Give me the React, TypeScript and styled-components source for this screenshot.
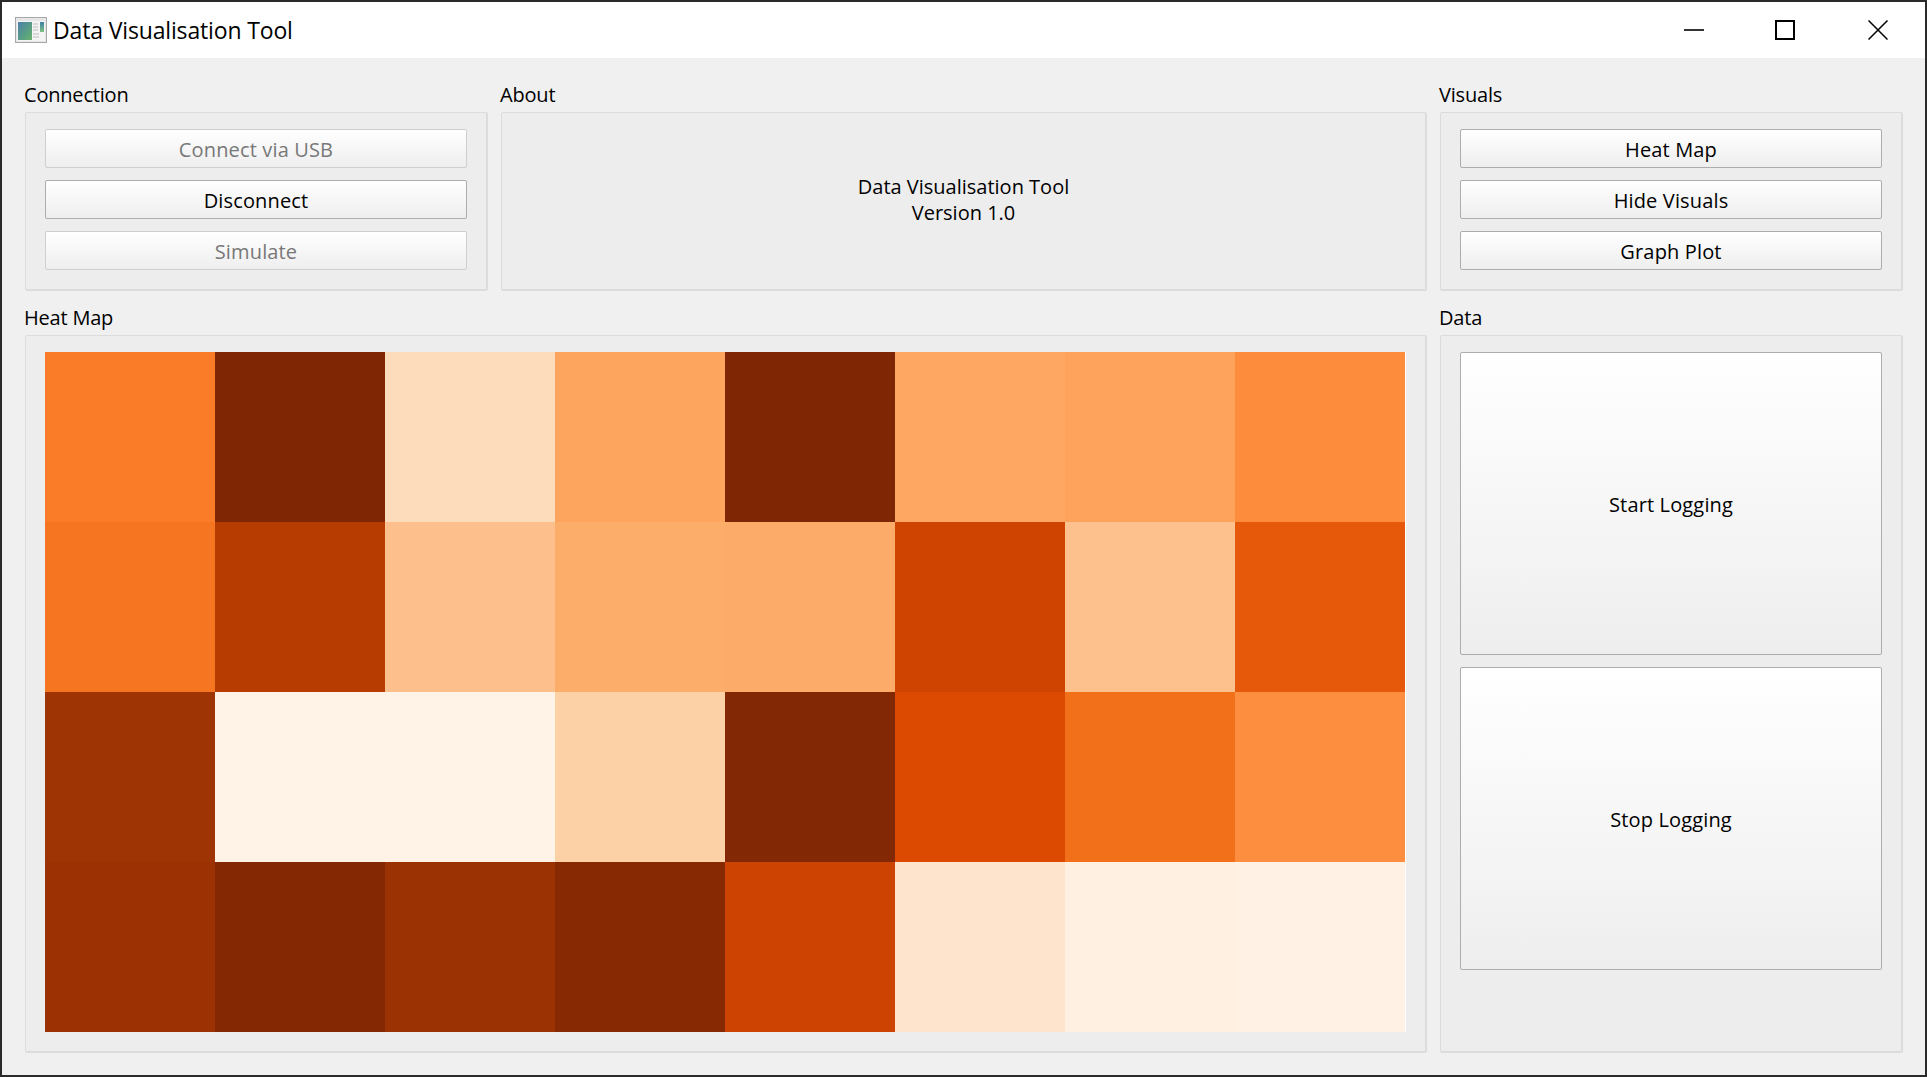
import styled, { createGlobalStyle } from "styled-components"

const GlobalStyle = createGlobalStyle`
  html, body {
    margin: 0;
    padding: 0;
    overflow: hidden;
  }
  * {
    box-sizing: border-box;
  }
`

const heatMap = [
  ["#fa7c28", "#7f2704", "#fddcbc", "#fda55e", "#7f2704", "#fda762", "#fda35c", "#fd8c3c"],
  ["#f67520", "#b63c02", "#fdc08c", "#fdad6a", "#fdab68", "#cf4401", "#fdc18e", "#e6590a"],
  ["#9e3303", "#fff2e6", "#fff3e7", "#fdd1a6", "#832804", "#dc4a02", "#f3701b", "#fd8e40"],
  ["#9c3203", "#842804", "#9b3203", "#872a03", "#cd4301", "#fee4cc", "#fff0e2", "#fff1e4"],
]

const Window = styled.div`
  width: 1927px;
  height: 1077px;
  border: 2px solid #2a2a2a;
  background: #f0f0f0;
  display: flex;
  flex-direction: column;
  font-family: "Open Sans", "Noto Sans", sans-serif;
  color: #000;
`

const TitleBar = styled.div`
  height: 56px;
  flex: none;
  background: #fff;
  display: flex;
  align-items: center;
  padding-left: 13px;
`

const AppTitle = styled.div`
  margin-left: 6px;
  font-size: 23px;
  letter-spacing: -0.15px;
`

const WindowControls = styled.div`
  margin-left: auto;
  display: flex;
  align-items: center;
  gap: 71px;
  padding-right: 37px;
`

const CloseIcon = styled.svg`
  margin-left: 2px;
`

const Content = styled.div`
  flex: 1;
  display: grid;
  grid-template-columns: 463px 926px 463px;
  grid-template-rows: 207px 746px;
  column-gap: 13px;
  row-gap: 16px;
  padding: 26px 22px 22px 23px;
`

const Section = styled.section<{ $span?: number }>`
  display: flex;
  flex-direction: column;
  min-width: 0;
  grid-column: span ${({ $span }) => $span ?? 1};
`

const Label = styled.div`
  height: 24px;
  margin: -1px 0 5px -1px;
  font-size: 20px;
  line-height: 24px;
  letter-spacing: -0.2px;
`

const GroupBox = styled.div`
  flex: 1;
  background: #ededed;
  border: 2px solid #dcdcdc;
  border-width: 1px 2px 2px 1px;
  border-radius: 2px;
  padding: 16px 19px;
  display: flex;
  flex-direction: column;
  gap: 12px;
`

const Button = styled.button<{ $big?: boolean }>`
  height: ${({ $big }) => ($big ? "303px" : "39px")};
  flex: none;
  padding: 1px 0 0;
  font: inherit;
  font-size: 20px;
  letter-spacing: 0.15px;
  color: #000;
  border: 1px solid #adadad;
  border-radius: 2px;
  background: linear-gradient(#fff, #eee);

  &:disabled {
    color: #787878;
    border-color: #cfcfcf;
  }
`

const AboutBox = styled(GroupBox)`
  align-items: center;
  justify-content: center;
  gap: 0;
  padding-bottom: 18px;
  font-size: 20px;
  line-height: 26px;
  text-align: center;
`

const HeatGrid = styled.div`
  display: grid;
  grid-template-columns: repeat(8, 170px);
  grid-auto-rows: 170px;
  width: 1361px;
  background: #fff;
`

const HeatCell = styled.div<{ $color: string }>`
  background: ${({ $color }) => $color};
`

function AppIcon() {
  return (
    <svg width="32" height="26" viewBox="0 0 32 26">
      <defs>
        <linearGradient id="chart" x1="0" y1="0" x2="1" y2="1">
          <stop offset="0" stopColor="#4d7fa8" />
          <stop offset="0.6" stopColor="#58a083" />
          <stop offset="1" stopColor="#6cb26e" />
        </linearGradient>
        <linearGradient id="side" x1="0" y1="0" x2="0" y2="1">
          <stop offset="0" stopColor="#3f7fa6" />
          <stop offset="1" stopColor="#7fc080" />
        </linearGradient>
      </defs>
      <rect x="0.5" y="0.5" width="31" height="25" fill="#e6e6e6" stroke="#a8a8a8" />
      <rect x="2" y="4" width="28" height="20" fill="#f4f4f4" />
      <rect x="3" y="5" width="14" height="18" fill="url(#chart)" />
      <rect x="25" y="5" width="4" height="10" fill="url(#side)" />
      <path d="M18 7h5M18 10h5M18 13h5M18 17h6M18 20h6" stroke="#bdbdbd" strokeWidth="1" />
    </svg>
  )
}

export default function App() {
  return (
    <>
      <GlobalStyle />
      <Window>
        <TitleBar>
          <AppIcon />
          <AppTitle>Data Visualisation Tool</AppTitle>
          <WindowControls>
            <svg width="20" height="20" viewBox="0 0 20 20">
              <path d="M0 10h20" stroke="#000" strokeWidth="1.6" />
            </svg>
            <svg width="20" height="20" viewBox="0 0 20 20">
              <rect x="1" y="1" width="18" height="18" fill="none" stroke="#000" strokeWidth="2" />
            </svg>
            <CloseIcon width="20" height="20" viewBox="0 0 20 20">
              <path d="M0.5 0.5l19 19M19.5 0.5l-19 19" stroke="#000" strokeWidth="1.5" />
            </CloseIcon>
          </WindowControls>
        </TitleBar>
        <Content>
          <Section>
            <Label>Connection</Label>
            <GroupBox>
              <Button disabled>Connect via USB</Button>
              <Button>Disconnect</Button>
              <Button disabled>Simulate</Button>
            </GroupBox>
          </Section>
          <Section>
            <Label>About</Label>
            <AboutBox>
              <div>Data Visualisation Tool</div>
              <div>Version 1.0</div>
            </AboutBox>
          </Section>
          <Section>
            <Label>Visuals</Label>
            <GroupBox>
              <Button>Heat Map</Button>
              <Button>Hide Visuals</Button>
              <Button>Graph Plot</Button>
            </GroupBox>
          </Section>
          <Section $span={2}>
            <Label>Heat Map</Label>
            <GroupBox>
              <HeatGrid>
                {heatMap.flat().map((color, i) => (
                  <HeatCell key={i} $color={color} />
                ))}
              </HeatGrid>
            </GroupBox>
          </Section>
          <Section>
            <Label>Data</Label>
            <GroupBox>
              <Button $big>Start Logging</Button>
              <Button $big>Stop Logging</Button>
            </GroupBox>
          </Section>
        </Content>
      </Window>
    </>
  )
}
